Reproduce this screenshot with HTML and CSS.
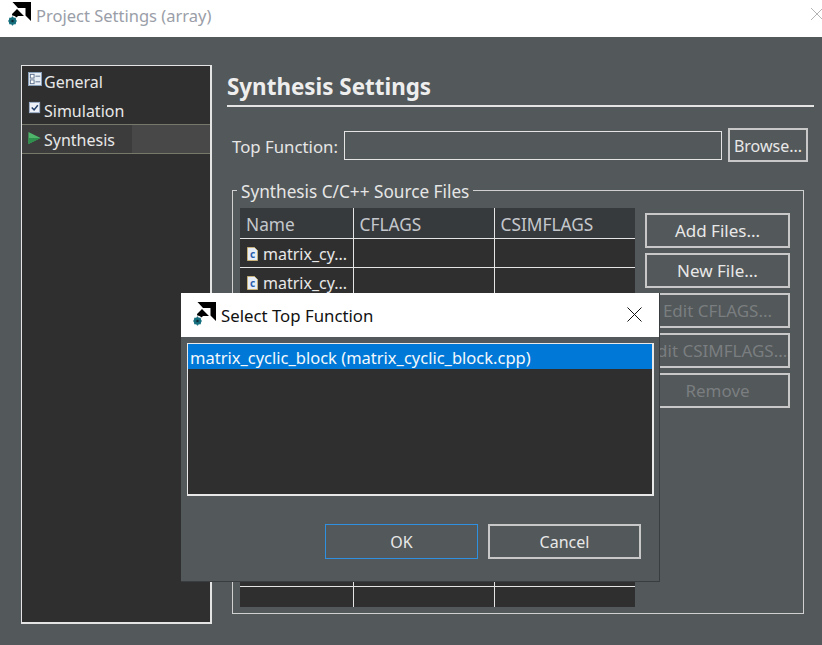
FILE: index.html
```html
<!DOCTYPE html>
<html lang="en">
<head>
    <meta charset="UTF-8">
    <meta name="viewport" content="width=device-width, initial-scale=1.0">
    <title>Project Settings (array)</title>
    <link rel="stylesheet" href="styles.css">
</head>
<body>
    <svg class="defs" width="0" height="0">
        <symbol id="logo" viewBox="-6 0 26 26">
            <path d="M0.5 0H19V19L13.5 13.5V6H6Z" fill="#000"/>
            <path d="M5 7L12 14H6L1 19L0 12Z" fill="#000"/>
            <circle cx="0.5" cy="19" r="5.4" fill="#fff"/>
            <circle cx="0.5" cy="19" r="2.8" fill="#12303a" stroke="#17707f" stroke-width="2"/>
            <path d="M0.5 14.6V23.4M-3.9 19H4.9M-2.6 15.9L3.6 22.1M3.6 15.9L-2.6 22.1" stroke="#17707f" stroke-width="1.2"/>
            <circle cx="0.5" cy="19" r="1.2" fill="#0d2a33"/>
        </symbol>
    </svg>

    <header class="titlebar">
        <svg class="logo" width="26" height="26"><use href="#logo"/></svg>
        <span class="title">Project Settings (array)</span>
        <svg class="close-main" width="12" height="12" viewBox="0 0 12 12"><path d="M0 0L12 12M0 12L12 0" stroke="#b4b4b4" fill="none"/></svg>
    </header>

    <div class="content">
        <nav class="tree">
            <div class="tree-item">
                <svg width="14" height="14" viewBox="0 0 15 15">
                    <rect x="0.5" y="0.5" width="14" height="14" fill="#e8eef5" stroke="#8aa0bc"/>
                    <rect x="2.5" y="2.5" width="4" height="4" fill="#fff" stroke="#5a6f8c"/>
                    <rect x="2.5" y="8.5" width="4" height="4" fill="#fff" stroke="#5a6f8c"/>
                    <path d="M8 4.5H13M8 10.5H13" stroke="#5a6f8c"/>
                </svg>
                <span>General</span>
            </div>
            <div class="tree-item">
                <svg width="14" height="14" viewBox="0 0 15 15">
                    <rect x="1.5" y="1.5" width="11" height="11" fill="#eef2f8" stroke="#9fb2cc"/>
                    <path d="M4 7L6.5 9.5L10.5 4.5" stroke="#25406b" stroke-width="1.6" fill="none"/>
                </svg>
                <span>Simulation</span>
            </div>
            <div class="tree-item tree-item-active">
                <svg width="14" height="14" viewBox="0 0 15 15">
                    <path d="M0.5 1L13.5 7.5L0.5 14Z" fill="#4fb56a"/>
                    <path d="M0.5 7.5H13.5L0.5 14Z" fill="#2f8f4c"/>
                </svg>
                <span class="tree-label">Synthesis</span>
            </div>
        </nav>

        <main class="settings">
            <h1 class="settings-title">Synthesis Settings</h1>

            <div class="top-row">
                <label class="top-label" for="top-fn">Top Function:</label>
                <input class="top-input" id="top-fn" type="text">
                <button class="btn btn-browse">Browse...</button>
            </div>

            <fieldset class="group">
                <legend class="group-legend">Synthesis C/C++ Source Files</legend>
                <div class="group-body">
                    <table class="files">
                        <thead>
                            <tr><th>Name</th><th>CFLAGS</th><th>CSIMFLAGS</th></tr>
                        </thead>
                        <tbody>
                            <tr><td><svg class="file-icon" width="11" height="14" viewBox="0 0 11 14"><path d="M0.5 0.5H7.5L10.5 3.5V13.5H0.5Z" fill="#e6edf7" stroke="#c9b27a"/><text x="5.5" y="10.5" class="file-c">c</text></svg>matrix_cy...</td><td></td><td></td></tr>
                            <tr><td><svg class="file-icon" width="11" height="14" viewBox="0 0 11 14"><path d="M0.5 0.5H7.5L10.5 3.5V13.5H0.5Z" fill="#e6edf7" stroke="#c9b27a"/><text x="5.5" y="10.5" class="file-c">c</text></svg>matrix_cy...</td><td></td><td></td></tr>
                            <tr><td></td><td></td><td></td></tr>
                            <tr><td></td><td></td><td></td></tr>
                            <tr><td></td><td></td><td></td></tr>
                            <tr><td></td><td></td><td></td></tr>
                            <tr><td></td><td></td><td></td></tr>
                            <tr><td></td><td></td><td></td></tr>
                            <tr><td></td><td></td><td></td></tr>
                            <tr><td></td><td></td><td></td></tr>
                            <tr><td></td><td></td><td></td></tr>
                            <tr><td></td><td></td><td></td></tr>
                            <tr class="row-last"><td></td><td></td><td></td></tr>
                        </tbody>
                    </table>
                    <div class="side-buttons">
                        <button class="btn">Add Files...</button>
                        <button class="btn">New File...</button>
                        <button class="btn btn-off">Edit CFLAGS...</button>
                        <button class="btn btn-off">Edit CSIMFLAGS...</button>
                        <button class="btn btn-off">Remove</button>
                    </div>
                </div>
            </fieldset>
        </main>
    </div>

    <div class="dialog">
        <div class="dialog-head">
            <svg class="logo" width="26" height="26"><use href="#logo"/></svg>
            <span class="dialog-title">Select Top Function</span>
            <svg class="dialog-close" width="15" height="15" viewBox="0 0 15 15"><path d="M0.5 0.5L14.5 14.5M0.5 14.5L14.5 0.5" stroke="#111" fill="none"/></svg>
        </div>
        <div class="dialog-body">
            <div class="fn-list">
                <div class="fn-row">matrix_cyclic_block (matrix_cyclic_block.cpp)</div>
            </div>
            <div class="dialog-actions">
                <button class="btn btn-dialog btn-default">OK</button>
                <button class="btn btn-dialog">Cancel</button>
            </div>
        </div>
    </div>
</body>
</html>
```

FILE: styles.css
```css
* {
    box-sizing: border-box;
}
html, body {
    height: 100%;
}
body {
    margin: 0;
    width: 822px;
    height: 645px;
    overflow: hidden;
    position: relative;
    background-color: #53585a;
    color: #e6e6e6;
    font-family: "Noto Sans", "Open Sans", sans-serif;
    font-size: 16px;
}
.defs {
    position: absolute;
}
.titlebar {
    height: 37px;
    background-color: #fff;
    display: flex;
    align-items: flex-start;
    padding: 2px 0 0 6px;
}
.logo {
    flex: none;
}
.title {
    margin: 2px 0 0 4px;
    color: #9a9ea8;
    font-size: 16.5px;
    line-height: 24px;
}
.close-main {
    margin: 6px -1px 0 auto;
}
.content {
    display: flex;
    padding: 28px 8px 0 21px;
}
.tree {
    width: 191px;
    height: 559px;
    background-color: #2f2f2f;
    border: 2px solid #e4e4e4;
    border-width: 1px 2px 2px 1px;
}
.tree-item {
    height: 29px;
    display: flex;
    align-items: center;
    gap: 2px;
    padding: 2px 0 0 6px;
    font-size: 16px;
    color: #e8e8e8;
}
.tree-item svg {
    flex: none;
    margin-top: -5px;
}
.tree-item-active {
    height: 30px;
    background: linear-gradient(to right, #3c3c3c 110px, #484848 110px);
    border: 1px solid #77776a;
    border-width: 1px 0;
}
.settings {
    flex: 1;
    margin-left: 15px;
}
.settings-title {
    margin: 0;
    height: 42px;
    border-bottom: 2px solid #e4e4e4;
    font-size: 22.4px;
    line-height: 44px;
    font-weight: 700;
    color: #eeeeee;
}
.top-row {
    display: flex;
    align-items: center;
    height: 34px;
    margin-top: 21px;
    padding-left: 5px;
}
.top-label {
    width: 112px;
    padding-top: 3px;
    font-size: 16.8px;
    white-space: nowrap;
}
.top-input {
    width: 378px;
    height: 29px;
    background: transparent;
    border: 1px solid #e4e4e4;
    outline: none;
}
.btn {
    display: block;
    background-color: transparent;
    border: 2px solid #c8c8c8;
    color: #e8e8e8;
    font-family: inherit;
    font-size: 16px;
    padding: 0;
    white-space: nowrap;
}
.btn-browse {
    width: 80px;
    height: 34px;
    margin-left: 6px;
    padding-top: 2px;
}
.group {
    width: 572px;
    height: 436px;
    margin: 16px 0 0 5px;
    padding: 0;
    border: 1px solid #d0d0d0;
}
.group-legend {
    margin-left: 4px;
    padding: 3px 4px 0;
    font-size: 17.2px;
    line-height: 21px;
    color: #e6e6e6;
}
.group-body {
    display: flex;
    margin: 6px 0 0 7px;
}
.files {
    width: 395px;
    border-collapse: collapse;
    table-layout: fixed;
    background-color: #2f2f2f;
    font-size: 16px;
}
.files th {
    height: 30px;
    background-color: #373a3d;
    color: #c4c8cc;
    font-size: 17.3px;
    font-weight: 400;
    text-align: left;
    padding: 3px 0 0 6px;
    border-bottom: 1px solid #e4e4e4;
}
.files th:first-child {
    width: 113px;
}
.files th + th, .files td + td {
    border-left: 1px solid #e4e4e4;
}
.files td {
    height: 29px;
    padding: 2px 0 0 7px;
    border-bottom: 1px solid #e4e4e4;
    color: #e8e8e8;
    white-space: nowrap;
    overflow: hidden;
}
.files .row-last td {
    height: 21px;
    border-bottom: none;
}
.file-icon {
    margin-right: 5px;
    vertical-align: -1px;
}
.file-c {
    fill: #2a5fae;
    font-size: 10px;
    font-weight: 700;
    text-anchor: middle;
}
.side-buttons {
    display: flex;
    flex-direction: column;
    gap: 5px;
    width: 145px;
    margin: 5px 0 0 10px;
}
.side-buttons .btn {
    height: 35px;
    font-size: 17px;
}
.btn-off {
    color: #7a7e80;
}
.dialog {
    position: absolute;
    left: 181px;
    top: 293px;
    width: 479px;
    height: 289px;
    background-color: #53585a;
    border: solid #3a3d3f;
    border-width: 0 1px 1px 0;
}
.dialog-head {
    height: 44px;
    background-color: #fff;
    display: flex;
    align-items: flex-start;
    padding: 9px 17px 0 10px;
}
.dialog-title {
    margin: 2px 0 0 4px;
    color: #111;
    font-size: 16.8px;
    line-height: 24px;
}
.dialog-close {
    margin: 5px 0 0 auto;
}
.dialog-body {
    padding: 6px 5px 0 6px;
}
.fn-list {
    height: 153px;
    background-color: #2f2f2f;
    border: 2px solid #e8e8e8;
    border-width: 1px 2px 2px 1px;
}
.fn-row {
    height: 25px;
    padding-left: 2px;
    background-color: #0078d7;
    color: #f4f8fc;
    font-size: 16.5px;
    line-height: 27px;
}
.dialog-actions {
    display: flex;
    justify-content: flex-end;
    gap: 10px;
    margin: 28px 13px 0 0;
}
.btn-dialog {
    width: 153px;
    height: 35px;
}
.btn-default {
    border: 1px solid #2f8fe0;
}
```
